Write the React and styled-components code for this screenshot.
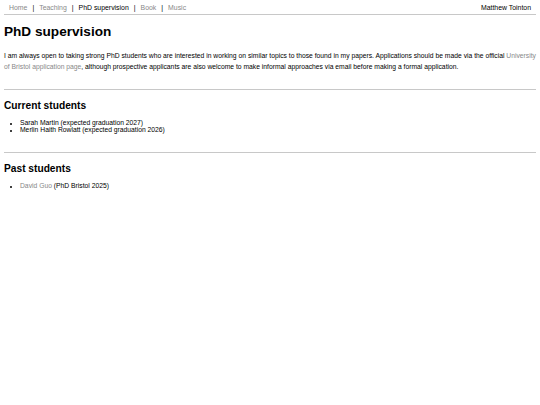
import React from 'react';
import styled, { createGlobalStyle } from 'styled-components';

const Global = createGlobalStyle`
    html, body {
        margin: 0;
        padding: 0;
        background: #fff;
    }
    body {
        font-family: "Liberation Sans", Arial, sans-serif;
        font-size: 6.75px;
        color: #000;
    }
`;

const App = () => {
    return (
        <>
            <Global />
            <Page>
                <NavBar>
                    <NavList>
                        <NavLink>Home</NavLink>
                        <Sep>|</Sep>
                        <NavLink>Teaching</NavLink>
                        <Sep>|</Sep>
                        <NavLink $active>PhD supervision</NavLink>
                        <Sep>|</Sep>
                        <NavLink>Book</NavLink>
                        <Sep>|</Sep>
                        <NavLink>Music</NavLink>
                    </NavList>
                    <Name>Matthew Tointon</Name>
                </NavBar>
                <Title>PhD supervision</Title>
                <Para>
                    I am always open to taking strong PhD students who are interested in working on similar topics to those found in my papers. Applications should be made via the official <TextLink>University of Bristol application page</TextLink>, although prospective applicants are also welcome to make informal approaches via email before making a formal application.
                </Para>
                <Rule />
                <Heading>Current students</Heading>
                <List>
                    <li>Sarah Martin (expected graduation 2027)</li>
                    <li>Merlin Haith Rowlatt (expected graduation 2026)</li>
                </List>
                <Rule />
                <Heading>Past students</Heading>
                <List>
                    <li><TextLink>David Guo</TextLink> (PhD Bristol 2025)</li>
                </List>
            </Page>
        </>
    );
}

export default App;

const Page = styled.div`
    padding: 0 4px;
`;
const NavBar = styled.nav`
    display: flex;
    justify-content: space-between;
    align-items: center;
    height: 14px;
    padding: 0 5px 0 5px;
    border-bottom: 1px solid #c8c8c8;
    font-size: 6.9px;
`;
const NavList = styled.div`
    display: flex;
    align-items: center;
`;
const NavLink = styled.a`
    color: ${p => p.$active ? '#000' : '#888'};
    text-decoration: none;
`;
const Sep = styled.span`
    margin: 0 5px;
    color: #000;
`;
const Name = styled.span`
    color: #000;
`;
const Title = styled.h1`
    font-size: 13.6px;
    font-weight: bold;
    margin: 9px 0 11px 0;
`;
const Para = styled.p`
    margin: 0;
    line-height: 11px;
`;
const TextLink = styled.a`
    color: #888;
    text-decoration: none;
`;
const Rule = styled.hr`
    border: none;
    border-top: 1px solid #c8c8c8;
    margin: 17px 0 0 0;
`;
const Heading = styled.h2`
    font-size: 10.2px;
    font-weight: bold;
    margin: 10px 0 8px 0;
`;
const List = styled.ul`
    margin: 0;
    padding: 0 0 2px 16px;
    line-height: 7px;
    li::marker {
        font-size: 6px;
    }
`;
